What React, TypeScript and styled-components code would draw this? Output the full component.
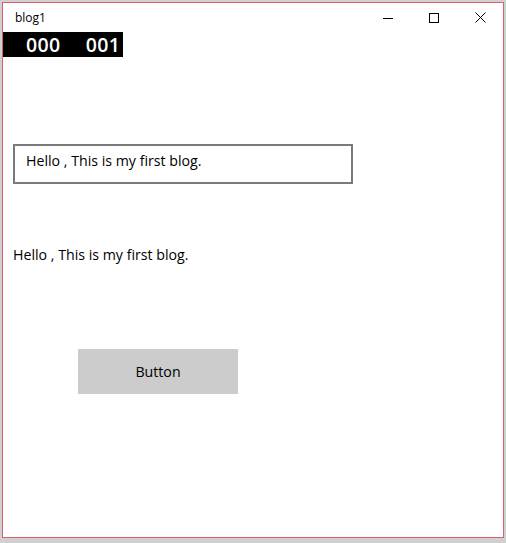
import React from "react";
import styled, { createGlobalStyle } from "styled-components";

const Global = createGlobalStyle`
  html, body { margin: 0; padding: 0; }
  body { background: #d6d6d6; }
`;

const Desktop = styled.div`
  width: 506px;
  height: 543px;
  box-sizing: border-box;
  padding: 2px 2px 5px 2px;
  background: linear-gradient(#d0d0d0, #d0d0d0);
  overflow: hidden;
`;

const Window = styled.div`
  width: 502px;
  height: 536px;
  box-sizing: border-box;
  border: 1px solid #d9616d;
  background: #ffffff;
  display: flex;
  flex-direction: column;
  font-family: "Open Sans", "Noto Sans", sans-serif;
  color: #000;
`;

const TitleBar = styled.div`
  height: 29px;
  display: flex;
  align-items: center;
  flex-shrink: 0;
`;

const Title = styled.div`
  flex: 1;
  padding-left: 12px;
  font-size: 12px;
  padding-bottom: 1px;
`;

const Control = styled.div`
  width: 46px;
  height: 29px;
  display: flex;
  align-items: center;
  justify-content: center;
`;

const Counter = styled.div`
  width: 120px;
  height: 25px;
  background: #000;
  color: #fff;
  display: flex;
  align-items: center;
  gap: 25px;
  padding-left: 23px;
  box-sizing: border-box;
  font-family: "Open Sans", "Noto Sans", sans-serif;
  font-size: 19.5px;
  font-weight: 600;
  letter-spacing: 0.4px;
  flex-shrink: 0;
`;

const Content = styled.div`
  padding: 87px 0 0 10px;
  display: flex;
  flex-direction: column;
  align-items: flex-start;
`;

const TextBox = styled.div`
  width: 340px;
  height: 40px;
  box-sizing: border-box;
  border: 2px solid #7a7a7a;
  padding: 5px 0 0 11px;
  font-size: 14.2px;
  color: #000;
`;

const TextBlock = styled.div`
  margin-top: 61px;
  font-size: 14.2px;
  line-height: 20px;
`;

const Button = styled.div`
  margin-top: 84px;
  margin-left: 65px;
  width: 160px;
  height: 45px;
  background: #cccccc;
  display: flex;
  align-items: center;
  justify-content: center;
  font-size: 14.2px;
`;

export default function App() {
  return (
    <>
      <Global />
      <Desktop>
        <Window>
          <TitleBar>
            <Title>blog1</Title>
            <Control>
              <svg width="10" height="10" viewBox="0 0 10 10">
                <line x1="0" y1="5.5" x2="10" y2="5.5" stroke="#000" strokeWidth="1" />
              </svg>
            </Control>
            <Control>
              <svg width="10" height="10" viewBox="0 0 10 10">
                <rect x="0.5" y="0.5" width="9" height="9" fill="none" stroke="#000" strokeWidth="1" />
              </svg>
            </Control>
            <Control>
              <svg width="11" height="11" viewBox="0 0 11 11">
                <path d="M0.5 0.5 L10.5 10.5 M10.5 0.5 L0.5 10.5" stroke="#000" strokeWidth="1" />
              </svg>
            </Control>
          </TitleBar>
          <Counter>
            <span>000</span>
            <span>001</span>
          </Counter>
          <Content>
            <TextBox>Hello , This is my first blog.</TextBox>
            <TextBlock>Hello , This is my first blog.</TextBlock>
            <Button>Button</Button>
          </Content>
        </Window>
      </Desktop>
    </>
  );
}
